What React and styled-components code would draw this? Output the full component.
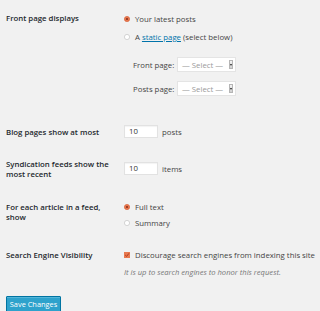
import React from 'react';
import styled, { createGlobalStyle } from 'styled-components';

const GlobalStyle = createGlobalStyle`
  html, body {
    margin: 0;
    padding: 0;
    background: #f1f1f1;
  }
  body {
    font-family: "Open Sans", "Liberation Sans", sans-serif;
    font-size: 7.8px;
    line-height: 10px;
    color: #444;
  }
`;

const Page = styled.div`
  width: 320px;
  height: 311px;
  padding-left: 6px;
  box-sizing: border-box;
  overflow: hidden;
`;

const Row = styled.div`
  display: grid;
  grid-template-columns: 118px 1fr;
  margin-top: ${(p) => p.$gap}px;
`;

const Label = styled.div`
  width: 108px;
  font-weight: 600;
  color: #23282d;
  margin-top: ${(p) => p.$offset || 0}px;
`;

const Field = styled.div`
  display: flex;
  flex-direction: column;
  align-items: flex-start;
  padding-top: ${(p) => p.$offset || 0}px;
`;

const Option = styled.div`
  display: flex;
  align-items: center;
  height: 10px;
  margin-top: ${(p) => p.$gap || 0}px;
  white-space: nowrap;
  svg {
    flex: none;
    margin-right: 5px;
  }
`;

const Link = styled.a`
  color: #0073aa;
  text-decoration: underline;
  margin: 0 2px;
`;

const SelectRow = styled.div`
  display: flex;
  align-items: center;
  margin-left: 9px;
  margin-top: ${(p) => p.$gap}px;
`;

const SelectLabel = styled.span`
  width: 44px;
`;

const Select = styled.div`
  position: relative;
  width: 59px;
  height: 15px;
  box-sizing: border-box;
  background: #fff;
  border: 1px solid #e4e4e4;
  color: #9a9a9a;
  padding-left: 4px;
  display: flex;
  align-items: center;
`;

const Arrow = styled.span`
  position: absolute;
  right: 2px;
  top: 2px;
  width: 4px;
  height: 9px;
  box-sizing: border-box;
  background: linear-gradient(#f4f4f4, #cfcfcf);
  border: 1px solid #b5b5b5;
  &::after {
    content: '';
    position: absolute;
    left: 0;
    top: 3px;
    border-left: 1px solid transparent;
    border-right: 1px solid transparent;
    border-top: 2px solid #222;
  }
`;

const Inline = styled.div`
  display: flex;
  align-items: center;
  align-self: start;
  margin-top: ${(p) => p.$offset || 0}px;
`;

const NumberInput = styled.div`
  width: 34px;
  height: 13px;
  box-sizing: border-box;
  background: #fff;
  border: 1px solid #e2e2e2;
  box-shadow: inset 0 1px 1px rgba(0, 0, 0, 0.05);
  padding-left: 4px;
  line-height: 11px;
  color: #333;
  margin-right: 4px;
`;

const Hint = styled.p`
  margin: 7px 0 0;
  font-style: italic;
  font-size: 7.6px;
  color: #777;
`;

const Button = styled.button`
  margin-top: 19px;
  width: 55px;
  height: 16px;
  padding: 0;
  background: #2ea2cc;
  border: 1px solid #0074a2;
  border-radius: 1px;
  box-shadow: inset 0 1px 0 rgba(120, 200, 230, 0.5);
  color: #fff;
  font-family: "Open Sans", "Liberation Sans", sans-serif;
  font-size: 7.4px;
  line-height: 14px;
`;

const Radio = ({ checked }) => (
  <svg width="6" height="6" viewBox="0 0 6 6">
    <circle
      cx="3"
      cy="3"
      r="2.6"
      fill={checked ? '#e8794f' : '#fff'}
      stroke={checked ? '#d9623a' : '#c4c4c4'}
      strokeWidth="0.7"
    />
    {checked && <circle cx="3" cy="3" r="1.1" fill="#8a2f1c" />}
  </svg>
);

const Checkbox = () => (
  <svg width="6" height="6" viewBox="0 0 6 6">
    <rect x="0" y="0" width="6" height="6" fill="#e8794f" />
    <polyline points="1.2,3 2.6,4.4 4.9,1.4" fill="none" stroke="#b03c20" strokeWidth="1" />
  </svg>
);

export default function App() {
  return (
    <Page>
      <GlobalStyle />
      <Row $gap={13}>
        <Label>Front page displays</Label>
        <Field $offset={1}>
          <Option>
            <Radio checked />
            Your latest posts
          </Option>
          <Option $gap={8}>
            <Radio />A<Link>static page</Link>(select below)
          </Option>
          <SelectRow $gap={15}>
            <SelectLabel>Front page:</SelectLabel>
            <Select>
              — Select —<Arrow />
            </Select>
          </SelectRow>
          <SelectRow $gap={9}>
            <SelectLabel>Posts page:</SelectLabel>
            <Select>
              — Select —<Arrow />
            </Select>
          </SelectRow>
        </Field>
      </Row>

      <Row $gap={29}>
        <Label $offset={2}>Blog pages show at most</Label>
        <Inline>
          <NumberInput>10</NumberInput>
          posts
        </Inline>
      </Row>

      <Row $gap={21}>
        <Label>Syndication feeds show the most recent</Label>
        <Inline $offset={3}>
          <NumberInput>10</NumberInput>
          items
        </Inline>
      </Row>

      <Row $gap={23}>
        <Label>For each article in a feed, show</Label>
        <Field>
          <Option>
            <Radio checked />
            Full text
          </Option>
          <Option $gap={6}>
            <Radio />
            Summary
          </Option>
        </Field>
      </Row>

      <Row $gap={22}>
        <Label>Search Engine Visibility</Label>
        <Field>
          <Option>
            <Checkbox />
            Discourage search engines from indexing this site
          </Option>
          <Hint>It is up to search engines to honor this request.</Hint>
        </Field>
      </Row>

      <Button>Save Changes</Button>
    </Page>
  );
}
